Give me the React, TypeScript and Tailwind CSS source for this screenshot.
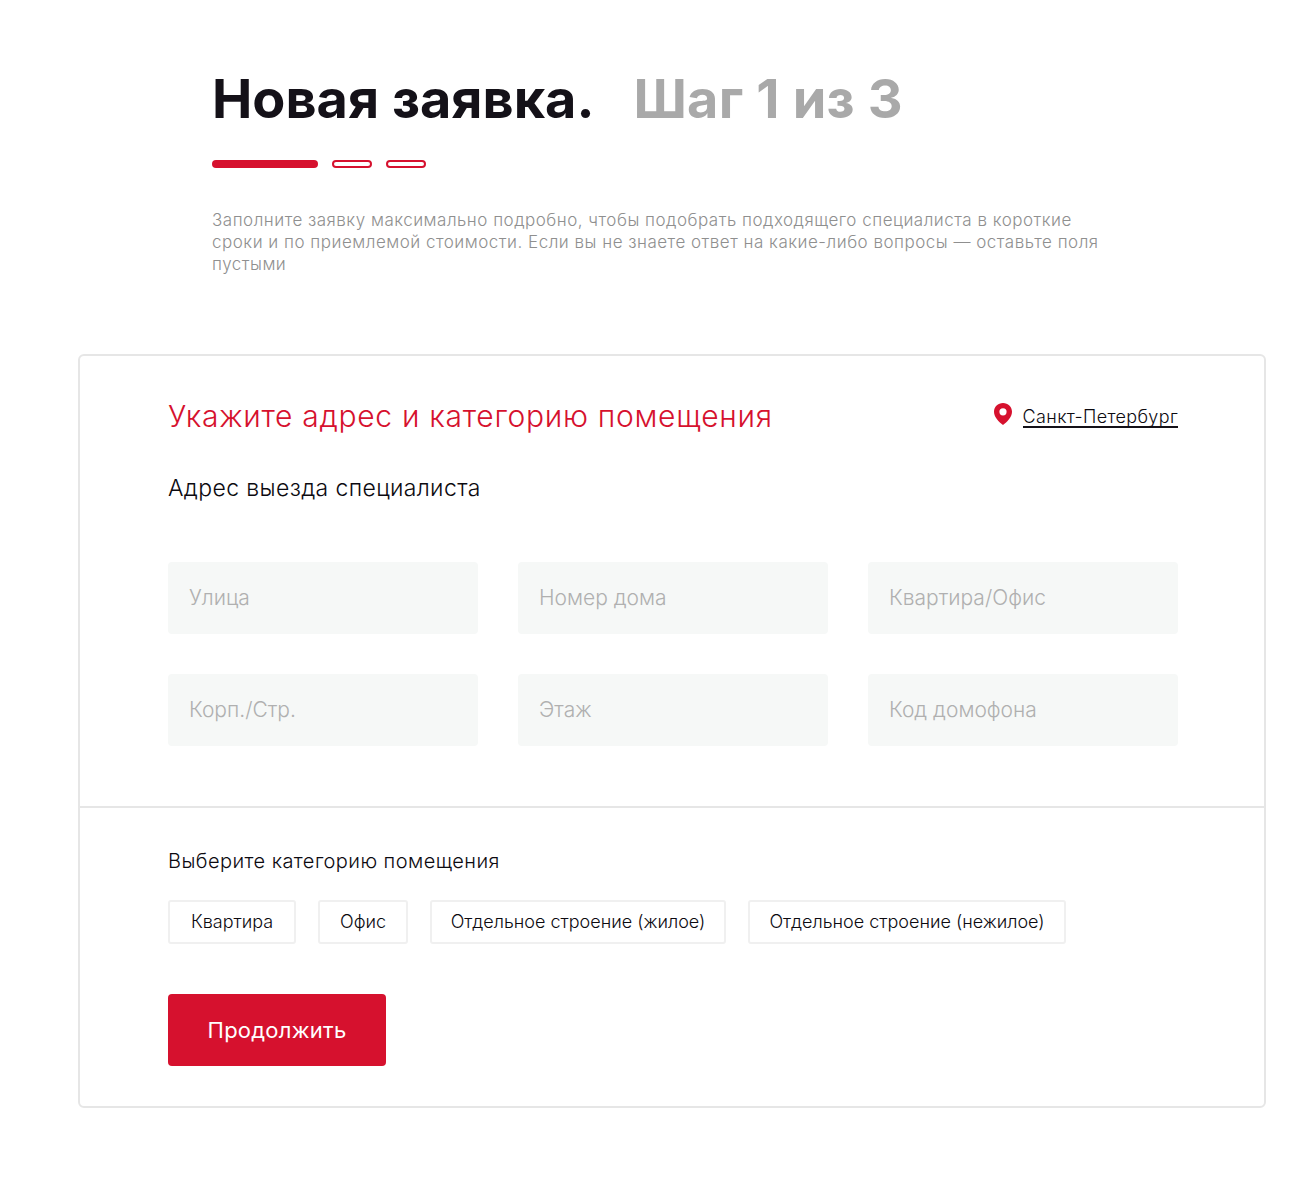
const addressFields = ['Улица', 'Номер дома', 'Квартира/Офис', 'Корп./Стр.', 'Этаж', 'Код домофона'];
const categories = [
  { name: 'Квартира', width: 'w-[128px]' },
  { name: 'Офис', width: 'w-[90px]' },
  { name: 'Отдельное строение (жилое)', width: 'w-[296px]' },
  { name: 'Отдельное строение (нежилое)', width: 'w-[318px]' },
];

const App = () => {
  return (
    <div className="min-h-[1178px] bg-white font-['Inter',sans-serif] pt-[63px] pl-[78px] pr-[24px]">
      {/* Header */}
      <div className="pl-[134px]">
        <h1 className="flex items-center h-[72px] text-[54px] leading-[72px] font-bold text-[#141118]">
          Новая заявка.
          <span className="ml-[39px] tracking-[0.2px] text-[#a9a9a9]">Шаг 1 из 3</span>
        </h1>
        <div className="flex gap-[14px] mt-[25px]">
          <div className="w-[106px] h-[8px] rounded-full bg-[#d6112e]" />
          <div className="w-[40px] h-[8px] rounded-full border-2 border-[#d6112e]" />
          <div className="w-[40px] h-[8px] rounded-full border-2 border-[#d6112e]" />
        </div>
        <p className="w-[895px] mt-[41px] text-[17px] leading-[22px] font-light tracking-[0.5px] text-[#8f8f8f]">
          Заполните заявку максимально подробно, чтобы подобрать подходящего специалиста в короткие сроки и по приемлемой стоимости. Если вы не знаете ответ на какие-либо вопросы — оставьте поля пустыми
        </p>
      </div>

      {/* Card */}
      <div className="mt-[79px] w-[1188px] h-[754px] rounded-[6px] border-2 border-[#e6e6e6]">
        <div className="h-[452px] pl-[88px] pr-[86px] pt-[40px] border-b-2 border-[#e6e6e6]">
          <div className="flex items-center justify-between h-[40px]">
            <h2 className="text-[30px] leading-[40px] font-light tracking-[0.7px] text-[#d6112e]">Укажите адрес и категорию помещения</h2>
            <div className="flex items-center gap-[11px]">
              <svg width="18" height="22" viewBox="0 0 18 22" className="-mt-[5px]">
                <path
                  fillRule="evenodd"
                  d="M9 0C4 0 0 3.8 0 8.8c0 5.5 5 10.2 9 13.2 4-3 9-7.7 9-13.2C18 3.8 14 0 9 0zm0 5.2a3.6 3.6 0 1 1 0 7.2 3.6 3.6 0 0 1 0-7.2z"
                  fill="#d6112e"
                />
              </svg>
              <a className="h-[24px] pt-[2px] text-[18px] leading-[22px] font-light tracking-[0.35px] text-[#0c0a10] border-b-2 border-[#141118]">Санкт-Петербург</a>
            </div>
          </div>
          <h3 className="mt-[36px] text-[23px] leading-[32px] font-light tracking-[0.37px] text-[#0c0a10]">Адрес выезда специалиста</h3>
          <div className="grid grid-cols-3 gap-x-[40px] gap-y-[40px] mt-[58px]">
            {addressFields.map((field) => (
              <div key={field} className="flex items-center h-[72px] px-[21px] rounded-[4px] bg-[#f6f8f7] text-[21px] font-light text-[#b0b0b0]">
                {field}
              </div>
            ))}
          </div>
        </div>
        <div className="pl-[88px] pr-[86px] pt-[40px]">
          <h3 className="text-[20px] leading-[26px] font-light tracking-[0.43px] text-[#0c0a10]">Выберите категорию помещения</h3>
          <div className="flex gap-[22px] mt-[26px]">
            {categories.map((category) => (
              <div key={category.name} className={`flex items-center justify-center h-[44px] pb-[2px] ${category.width} rounded-[3px] border-2 border-[#f0f0f0] text-[18px] font-light text-[#0c0a10]`}>
                {category.name}
              </div>
            ))}
          </div>
          <button className="mt-[50px] w-[218px] h-[72px] rounded-[4px] bg-[#d6112e] text-[22px] tracking-[0.25px] text-white">Продолжить</button>
        </div>
      </div>
    </div>
  );
};

export default App;
